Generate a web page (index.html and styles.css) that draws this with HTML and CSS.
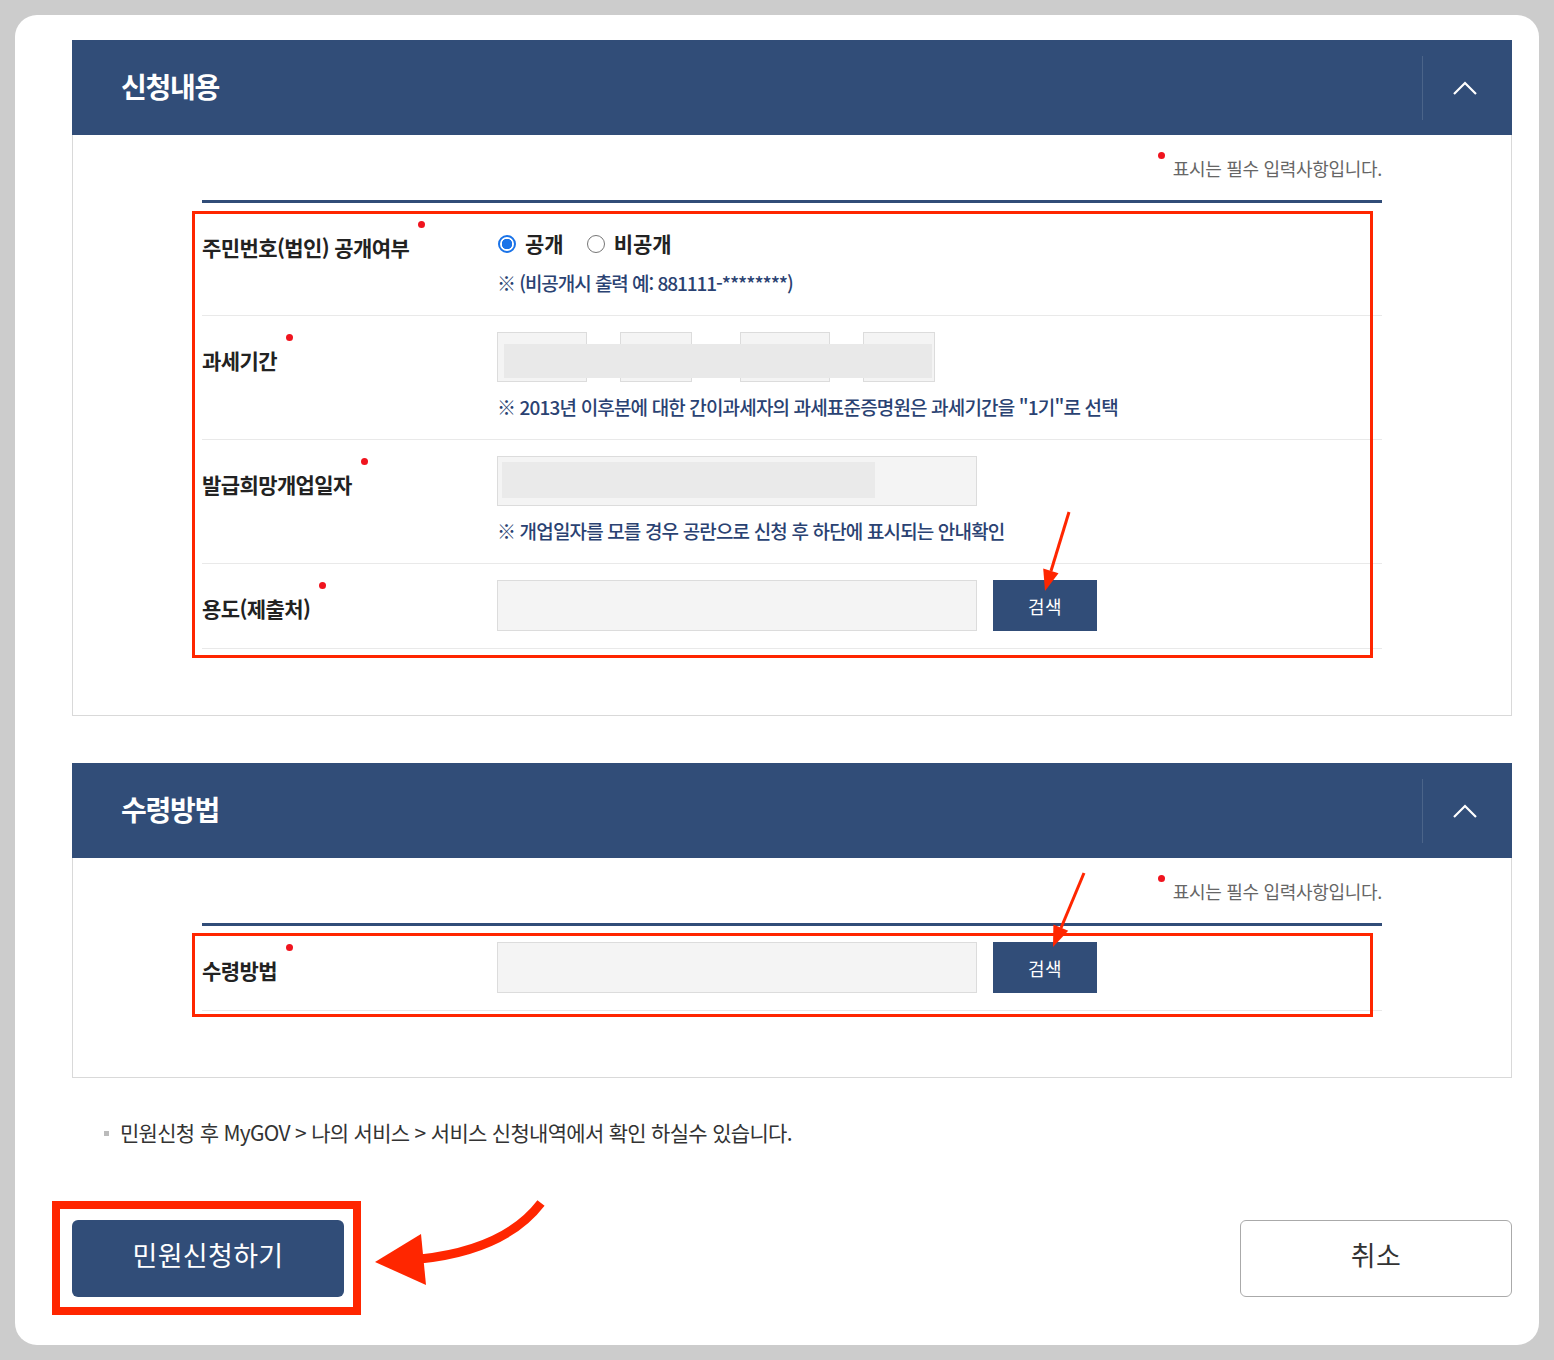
FILE: index.html
```html
<!DOCTYPE html>
<html lang="ko">
<head>
  <meta charset="UTF-8">
  <meta name="viewport" content="width=device-width, initial-scale=1.0">
  <title>민원신청</title>
  <link rel="stylesheet" href="styles.css">
</head>
<body>
  <div class="card">
    <!-- 신청내용 -->
    <section class="panel">
      <div class="panel-head">
        <h2>신청내용</h2>
        <div class="toggle">
          <svg width="26" height="16" viewBox="0 0 26 16"><polyline points="2,14 13,3 24,14" fill="none" stroke="#fff" stroke-width="2.2"/></svg>
        </div>
      </div>
      <div class="panel-body">
        <p class="req-note"><span class="dot"></span>표시는 필수 입력사항입니다.</p>
        <div class="form-table">
          <div class="row">
            <div class="label">주민번호(법인) 공개여부<span class="dot"></span></div>
            <div class="cell">
              <div class="radios">
                <span class="radio checked"></span><span class="radio-text">공개</span>
                <span class="radio"></span><span class="radio-text">비공개</span>
              </div>
              <p class="help">※ (비공개시 출력 예: 881111-********)</p>
            </div>
          </div>
          <div class="row">
            <div class="label">과세기간<span class="dot"></span></div>
            <div class="cell">
              <div class="period">
                <div class="box w90"></div>
                <div class="box w72"></div>
                <div class="box w90 gap-l"></div>
                <div class="box w72"></div>
                <div class="redact"></div>
              </div>
              <p class="help spaced">※ 2013년 이후분에 대한 간이과세자의 과세표준증명원은 과세기간을 "1기"로 선택</p>
            </div>
          </div>
          <div class="row">
            <div class="label">발급희망개업일자<span class="dot"></span></div>
            <div class="cell">
              <div class="field">
                <div class="field-redact"></div>
              </div>
              <p class="help spaced">※ 개업일자를 모를 경우 공란으로 신청 후 하단에 표시되는 안내확인</p>
            </div>
          </div>
          <div class="row">
            <div class="label">용도(제출처)<span class="dot"></span></div>
            <div class="cell">
              <div class="search-line">
                <div class="field tall"></div>
                <button class="btn-search" type="button">검색</button>
              </div>
            </div>
          </div>
        </div>
      </div>
    </section>

    <!-- 수령방법 -->
    <section class="panel second">
      <div class="panel-head">
        <h2>수령방법</h2>
        <div class="toggle">
          <svg width="26" height="16" viewBox="0 0 26 16"><polyline points="2,14 13,3 24,14" fill="none" stroke="#fff" stroke-width="2.2"/></svg>
        </div>
      </div>
      <div class="panel-body">
        <p class="req-note"><span class="dot"></span>표시는 필수 입력사항입니다.</p>
        <div class="form-table">
          <div class="row">
            <div class="label">수령방법<span class="dot"></span></div>
            <div class="cell">
              <div class="search-line">
                <div class="field tall"></div>
                <button class="btn-search" type="button">검색</button>
              </div>
            </div>
          </div>
        </div>
      </div>
    </section>

    <p class="foot"><span class="bullet"></span>민원신청 후 MyGOV &gt; 나의 서비스 &gt; 서비스 신청내역에서 확인 하실수 있습니다.</p>

    <div class="actions">
      <button class="btn-primary" type="button">민원신청하기</button>
      <button class="btn-cancel" type="button">취소</button>
    </div>
  </div>

  <!-- annotation marks drawn over the page -->
  <svg class="marks" width="1554" height="1360" viewBox="0 0 1554 1360">
    <g fill="none" stroke="#ff2600">
      <rect x="193.5" y="212.5" width="1178" height="444" stroke-width="3"/>
      <rect x="193.5" y="934.5" width="1178" height="81" stroke-width="3"/>
      <rect x="56" y="1205" width="301" height="106" stroke-width="8"/>
      <line x1="1069" y1="512" x2="1051" y2="571" stroke-width="3"/>
      <line x1="1084" y1="873" x2="1061" y2="928" stroke-width="3"/>
      <path d="M541 1203 Q505 1250 420 1259" stroke-width="9"/>
    </g>
    <g fill="#ff2600">
      <polygon points="1058.5,573.3 1043.2,568.5 1045,591"/>
      <polygon points="1068.2,930.7 1053.4,924.5 1053,947"/>
      <polygon points="375,1262 421,1234 426,1285"/>
    </g>
  </svg>
</body>
</html>
```

FILE: styles.css
```css
/* Page */
body {
  margin: 0;
  background: #cccccc;
  font-family: "Noto Sans CJK KR", "Noto Sans", sans-serif;
  color: #333;
}

.card {
  box-sizing: border-box;
  margin: 15px;
  height: 1330px;
  background: #fff;
  border-radius: 22px;
  padding: 25px 27px 0 57px;
}

/* Panels */
.panel.second {
  margin-top: 47px;
}

.panel-head {
  height: 95px;
  background: #314d78;
  display: flex;
  align-items: center;
  justify-content: space-between;
  padding-left: 49px;
}

.panel-head h2 {
  margin: 0 0 4px;
  color: #fff;
  font-size: 28px;
  font-weight: 700;
  letter-spacing: -1.3px;
}

.toggle {
  box-sizing: border-box;
  width: 90px;
  height: 64px;
  border-left: 1px solid rgba(255, 255, 255, 0.13);
  display: flex;
  align-items: center;
  justify-content: center;
  padding-right: 5px;
}

.panel-body {
  border: 1px solid #d9d9d9;
  border-top: 0;
  padding: 20px 129px 66px;
}

/* Required mark */
.dot {
  display: inline-block;
  width: 7px;
  height: 7px;
  border-radius: 50%;
  background: #f0141e;
  vertical-align: top;
}

.req-note {
  margin: 0;
  text-align: right;
  font-size: 18px;
  line-height: 26px;
  color: #666;
  letter-spacing: -0.3px;
}

.req-note .dot {
  margin: -3px 8px 0 0;
}

/* Form table */
.form-table {
  margin-top: 19px;
  border-top: 3px solid #314d78;
}

.row {
  display: grid;
  grid-template-columns: 295px 1fr;
  padding: 16px 0;
  border-bottom: 1px solid #e9e9e9;
}

.label {
  padding-top: 4px;
  font-size: 21px;
  font-weight: 700;
  line-height: 48px;
  color: #222;
  letter-spacing: -0.6px;
}

.label .dot {
  margin: -2px 0 0 9px;
}

.radios {
  display: flex;
  align-items: center;
  height: 48px;
  font-size: 21px;
  font-weight: 700;
  color: #222;
  letter-spacing: 0;
}

.radio {
  box-sizing: border-box;
  width: 18px;
  height: 18px;
  border: 1.5px solid #767676;
  border-radius: 50%;
  margin: 2px 9px 0 1px;
}

.radio.checked {
  border: 2px solid #1a73e8;
  background: radial-gradient(circle, #1a73e8 0 5px, #fff 5.5px);
}

.radio-text {
  margin-right: 22px;
}

.help {
  margin: 0;
  font-size: 19px;
  font-weight: 500;
  line-height: 32px;
  color: #2a4272;
  letter-spacing: -1.05px;
}

.help.spaced {
  margin-top: 9px;
  letter-spacing: -0.85px;
}

/* Inputs */
.period {
  position: relative;
  display: flex;
  gap: 33px;
  height: 50px;
}

.box {
  box-sizing: border-box;
  height: 50px;
  background: #f4f4f4;
  border: 1px solid #dcdcdc;
}

.w90 { width: 90px; }
.w72 { width: 72px; }
.gap-l { margin-left: 15px; }

.redact {
  position: absolute;
  left: 7px;
  top: 12px;
  width: 428px;
  height: 34px;
  background: #e9e9e9;
}

.field {
  box-sizing: border-box;
  width: 480px;
  height: 50px;
  background: #f4f4f4;
  border: 1px solid #dcdcdc;
  padding: 5px 0 0 4px;
}

.field.tall {
  height: 51px;
}

.field-redact {
  width: 373px;
  height: 36px;
  background: #eaeaea;
}

.search-line {
  display: flex;
  gap: 16px;
}

.btn-search {
  width: 104px;
  height: 51px;
  border: 0;
  background: #314d78;
  color: #fff;
  font-family: inherit;
  font-size: 18px;
  letter-spacing: 0.5px;
}

/* Footer */
.foot {
  margin: 40px 0 0;
  padding-left: 32px;
  font-size: 21px;
  line-height: 28px;
  color: #333;
  letter-spacing: -0.7px;
}

.bullet {
  display: inline-block;
  width: 5px;
  height: 5px;
  background: #bbb;
  margin: 0 11px 4px 0;
  vertical-align: middle;
}

.actions {
  display: flex;
  justify-content: space-between;
  margin-top: 74px;
}

.btn-primary,
.btn-cancel {
  width: 272px;
  height: 77px;
  border-radius: 6px;
  padding: 0 0 8px;
  font-family: inherit;
  font-size: 27px;
  letter-spacing: 0.3px;
}

.btn-primary {
  border: 0;
  background: #314d78;
  color: #fff;
}

.btn-cancel {
  border: 1px solid #aaa;
  background: #fff;
  color: #333;
}

/* Annotations */
.marks {
  position: absolute;
  top: 0;
  left: 0;
  pointer-events: none;
}
```
